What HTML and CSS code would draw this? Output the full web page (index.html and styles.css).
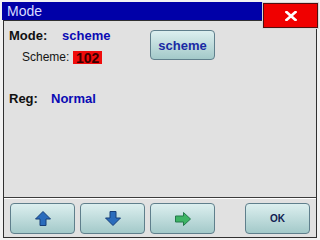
FILE: index.html
```html
<!DOCTYPE html>
<html lang="en">
<head>
    <meta charset="UTF-8">
    <title>Mode</title>
    <link rel="stylesheet" href="styles.css">
</head>
<body>
    <div class="window">
        <div class="titlebar">Mode</div>
        <button class="close" aria-label="Close">
            <svg width="12" height="10" viewBox="0 0 12 10">
                <path d="M1.5 1 L10.5 9 M10.5 1 L1.5 9" stroke="#fff" stroke-width="2.6" stroke-linecap="square"/>
            </svg>
        </button>
        <div class="client">
            <div class="content">
                <div class="info">
                    <div class="row-mode"><span class="label">Mode:</span><span class="value">scheme</span></div>
                    <div class="row-scheme"><span class="sub-label">Scheme:</span><span class="badge">102</span></div>
                    <div class="row-reg"><span class="label">Reg:</span><span class="value">Normal</span></div>
                </div>
                <button class="btn btn-scheme">scheme</button>
            </div>
            <div class="separator"></div>
            <div class="toolbar">
                <button class="btn" aria-label="Up">
                    <svg width="16" height="15" viewBox="0 0 16 15">
                        <path d="M8 0.5 L15.5 8 L11 8 L11 14.5 L5 14.5 L5 8 L0.5 8 Z" fill="#2a6cbc" stroke="#173f78" stroke-width="1"/>
                    </svg>
                </button>
                <button class="btn" aria-label="Down">
                    <svg width="16" height="15" viewBox="0 0 16 15">
                        <path d="M8 14.5 L15.5 7 L11 7 L11 0.5 L5 0.5 L5 7 L0.5 7 Z" fill="#2a6cbc" stroke="#173f78" stroke-width="1"/>
                    </svg>
                </button>
                <button class="btn" aria-label="Next">
                    <svg width="16" height="14" viewBox="0 0 16 14">
                        <path d="M15.5 7 L8.5 0.5 L8.5 4 L0.5 4 L0.5 10 L8.5 10 L8.5 13.5 Z" fill="#3cb464" stroke="#23794a" stroke-width="1"/>
                    </svg>
                </button>
                <button class="btn btn-ok">OK</button>
            </div>
        </div>
    </div>
</body>
</html>
```

FILE: styles.css
```css
body {
    margin: 0;
    background-color: #f2f2f2;
    font-family: "Liberation Sans", Arial, sans-serif;
}
.window {
    position: relative;
    display: flex;
    flex-direction: column;
    width: 316px;
    height: 238px;
    margin: 2px 2px 0 2px;
}
.titlebar {
    height: 18px;
    line-height: 18px;
    padding-left: 5px;
    background-color: #0000a8;
    color: #d8dcff;
    font-size: 14px;
}
.close {
    position: absolute;
    top: 1px;
    left: 261px;
    width: 55px;
    height: 25px;
    padding: 0;
    border: 1px solid #501010;
    outline: 1px solid #d8d8d8;
    background-color: #f00000;
    display: flex;
    align-items: center;
    justify-content: center;
}
.client {
    flex: 1;
    display: flex;
    flex-direction: column;
    margin: 0 1px 2px 1px;
    border: 1px solid #303030;
    background-color: #e1e1e1;
}
.content {
    flex: 1;
    display: grid;
    grid-template-columns: 141px auto;
    align-items: start;
    padding: 7px 0 0 5px;
}
.row-mode, .row-reg {
    font-size: 13px;
    line-height: 16px;
    font-weight: bold;
    color: #101010;
}
.label {
    display: inline-block;
}
.row-mode .label {
    width: 53px;
}
.row-reg .label {
    width: 42px;
}
.value {
    color: #0a0ab4;
}
.row-scheme {
    display: flex;
    align-items: center;
    margin: 5px 0 0 13px;
    font-size: 12px;
    line-height: 14px;
    color: #141414;
}
.sub-label {
    width: 51px;
}
.badge {
    padding: 0 3px;
    height: 13px;
    line-height: 14px;
    margin-top: 2px;
    background-color: #f00c0c;
    color: #3a0000;
    font-size: 14px;
    font-weight: bold;
}
.row-reg {
    margin-top: 27px;
}
.btn {
    width: 65px;
    height: 31px;
    padding: 0;
    border: 1px solid #5f7f8c;
    border-radius: 4px;
    background: linear-gradient(#dcefef, #a3c9c9);
    display: flex;
    align-items: center;
    justify-content: center;
}
.btn-scheme {
    height: 30px;
    margin-top: 2px;
    font-family: "Liberation Sans", Arial, sans-serif;
    font-size: 13px;
    font-weight: bold;
    color: #1a2aa4;
}
.separator {
    height: 1px;
    background-color: #3c3c3c;
    border-bottom: 1px solid #ffffff;
}
.toolbar {
    display: flex;
    gap: 5px;
    padding: 4px 6px 3px 6px;
}
.btn-ok {
    margin-left: auto;
    font-family: "Liberation Sans", Arial, sans-serif;
    font-size: 10px;
    font-weight: bold;
    color: #102050;
}
```
